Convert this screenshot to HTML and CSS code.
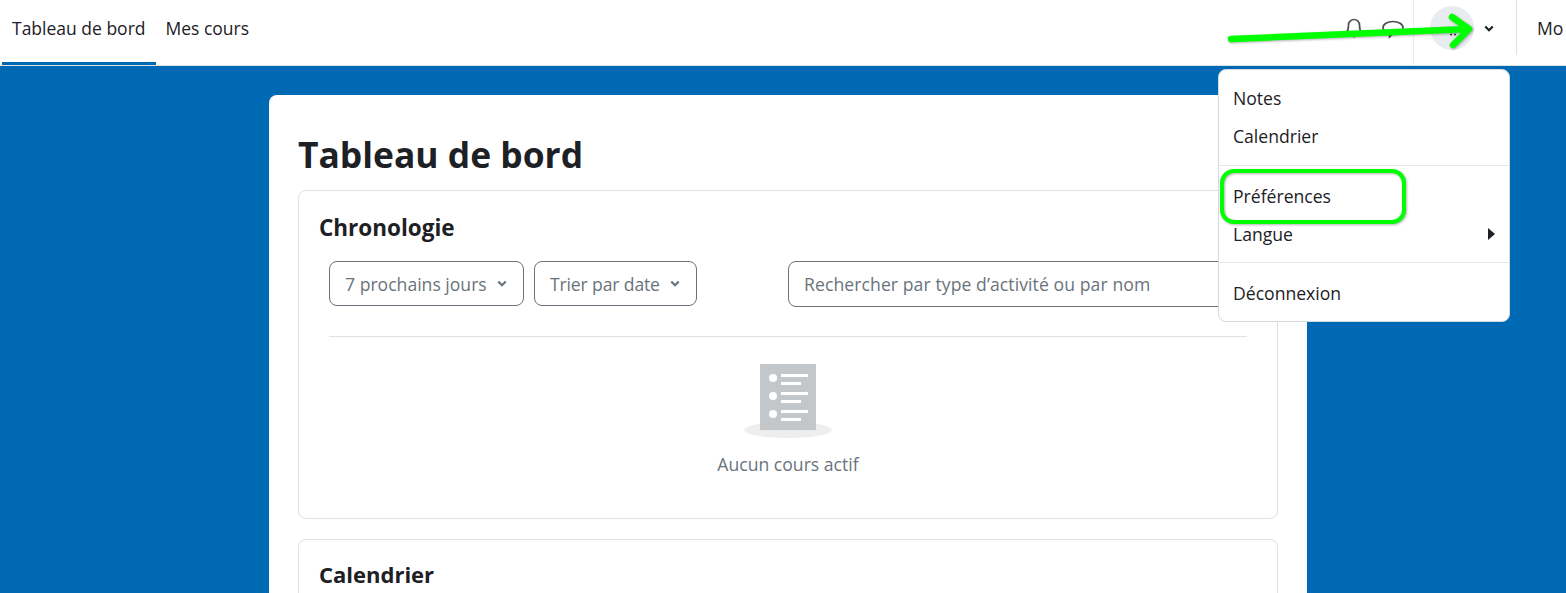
FILE: index.html
```html
<!DOCTYPE html>
<html lang="fr">
<head>
<meta charset="utf-8">
<title>Tableau de bord</title>
<link rel="stylesheet" href="styles.css">
</head>
<body>
<header class="navbar">
  <nav class="primary">
    <a class="tab active">Tableau de bord</a>
    <a class="tab">Mes cours</a>
  </nav>
  <div class="tools">
    <svg class="ico bell" viewBox="0 0 20 24" width="20" height="24"><path d="M2.500 17c1.500-2 2-4 2-8a5.500 5.500 0 0 1 11 0c0 4 .5 6 2 8z" fill="none" stroke="#4b5157" stroke-width="1.700"/><circle cx="10" cy="20" r="1.500" fill="#4b5157"/></svg>
    <svg class="ico chat" viewBox="0 0 24 24" width="24" height="24"><path d="M12 3.500c5.500 0 10 2.500 10 6s-4.500 6-10 6l-3.500 3.500v-4C4.500 14 2 12 2 9.500c0-3.500 4.500-6 10-6z" fill="none" stroke="#4b5157" stroke-width="1.700"/></svg>
    <div class="user">
      <span class="avatar"></span>
      <svg class="caret" viewBox="0 0 12 8" width="10" height="7"><path d="M1.500 1.500 6 6l4.500-4.500" fill="none" stroke="#1d2125" stroke-width="2.600"/></svg>
    </div>
    <div class="edit">Mo</div>
  </div>
</header>

<main class="page">
  <section class="main-card">
    <h1 class="title">Tableau de bord</h1>
    <article class="block timeline">
      <h2 class="block-title">Chronologie</h2>
      <div class="filters">
        <button class="select days">7 prochains jours<svg class="chev" viewBox="0 0 12 8" width="10" height="7"><path d="M1.500 1.500 6 6l4.500-4.500" fill="none" stroke="#6a737b" stroke-width="2.600"/></svg></button>
        <button class="select sort">Trier par date<svg class="chev" viewBox="0 0 12 8" width="10" height="7"><path d="M1.500 1.500 6 6l4.500-4.500" fill="none" stroke="#6a737b" stroke-width="2.600"/></svg></button>
        <div class="search">Rechercher par type d’activité ou par nom</div>
      </div>
      <hr class="rule">
      <div class="empty">
        <svg class="empty-ico" viewBox="0 0 88 76" width="88" height="76">
          <ellipse cx="44" cy="66" rx="44" ry="8" fill="#eeeeef"/>
          <rect x="16" y="0" width="56" height="66" fill="#c4c7ca"/>
          <g fill="#fff">
            <circle cx="29" cy="14" r="4"/><rect x="37" y="10" width="27" height="3"/><rect x="37" y="18" width="20" height="3"/>
            <circle cx="29" cy="32" r="4"/><rect x="37" y="28" width="27" height="3"/><rect x="37" y="36" width="20" height="3"/>
            <circle cx="29" cy="50" r="4"/><rect x="37" y="46" width="27" height="3"/><rect x="37" y="54" width="20" height="3"/>
          </g>
        </svg>
        <p class="empty-text">Aucun cours actif</p>
      </div>
    </article>
    <article class="block calendar">
      <h2 class="block-title">Calendrier</h2>
    </article>
  </section>
</main>

<div class="menu">
  <div class="menu-group">
    <a class="item">Notes</a>
    <a class="item">Calendrier</a>
  </div>
  <div class="menu-group">
    <a class="item">Préférences</a>
    <a class="item lang">Langue<span class="arrow"></span></a>
  </div>
  <div class="menu-group">
    <a class="item">Déconnexion</a>
  </div>
</div>

<svg class="annot-arrow" viewBox="0 0 260 50" width="260" height="50">
  <path d="M224 26.500h2M228 26.500h2" fill="none" stroke="#333" stroke-width="1.500"/>
  <path d="M5 31 L242 21 M226 9 L243 21 L227 37" fill="none" stroke="#00ff00" stroke-width="6.500" stroke-linecap="round" stroke-linejoin="round"/>
</svg>
<div class="annot-box"></div>
</body>
</html>
```

FILE: styles.css
```css
* { box-sizing: border-box; }
html, body { height: 100%; }
body {
  margin: 0;
  overflow: hidden;
  background: #0069b4;
  color: #1d2125;
  font-family: "Open Sans", "Noto Sans", sans-serif;
  font-size: 17.6px;
}
.navbar {
  height: 66px;
  background: #fff;
  border-bottom: 1px solid #dee2e6;
  display: flex;
  justify-content: space-between;
  overflow: hidden;
}
.primary { display: flex; padding-left: 2px; height: 65px; }
.tab {
  padding: 0 10px;
  line-height: 57px;
  height: 65px;
  border-bottom: 3px solid transparent;
  font-size: 17.5px;
  white-space: nowrap;
}
.tab.active { border-bottom-color: #0069b4; }
.tools { display: flex; align-items: flex-start; width: 240px; flex: none; overflow: hidden; }
.ico { flex: none; margin-top: 16px; }
.bell { margin-left: 18px; }
.chat { margin-left: 17px; margin-top: 18px; }
.user {
  margin-left: 8px;
  width: 103px;
  height: 65px;
  border-left: 1px solid #e6ecf1;
  display: flex;
  padding-left: 16px;
  flex: none;
}
.avatar { width: 44px; height: 44px; border-radius: 50%; background: #e9ecef; margin-top: 6px; flex: none; }
.caret { margin: 25px 0 0 10px; flex: none; }
.edit {
  flex: none;
  height: 55px;
  border-left: 1px solid #dee2e6;
  padding-left: 20px;
  line-height: 57px;
  white-space: nowrap;
}
.page { padding: 29px 0 0 269px; }
.main-card {
  width: 1038px;
  height: 600px;
  background: #fff;
  border-radius: 8px 8px 0 0;
  padding: 32px 29px 0;
}
.title { margin: 0 0 9px; font-size: 35.4px; line-height: 54px; font-weight: 700; }
.block {
  border: 1px solid #dee2e6;
  border-radius: 8px;
  padding: 20px;
}
.timeline { height: 329px; margin-bottom: 20px; padding-top: 22px; }
.timeline .block-title { font-size: 22.5px; }
.block-title { margin: 0; font-size: 22px; line-height: 30px; font-weight: 700; }
.filters { display: flex; margin: 18px 10px 0; gap: 10px; width: 917px; }
.select {
  height: 45px;
  border: 1px solid #6a737b;
  border-radius: 8px;
  background: #fff;
  color: #6a737b;
  font: inherit;
  padding: 0 15px;
  display: flex;
  align-items: center;
  gap: 10px;
  white-space: nowrap;
}
.days { width: 195px; }
.sort { width: 163px; letter-spacing: -.15px; }
.search {
  margin-left: 81px;
  flex: 1;
  height: 46px;
  border: 1px solid #6a737b;
  border-radius: 8px;
  color: #6a737b;
  padding: 0 15px;
  line-height: 44px;
  letter-spacing: .08px;
  white-space: nowrap;
}
.rule { border: 0; border-top: 1px solid #dee2e6; margin: 29px 10px 0; width: 918px; }
.empty { display: flex; flex-direction: column; align-items: center; margin-top: 27px; color: #6a737b; width: 938px; }
.empty-text { margin: 11px 0 0; line-height: 26px; }
.calendar { height: 100px; padding-top: 19px; }
.menu {
  position: absolute;
  left: 1218px;
  top: 69px;
  width: 292px;
  height: 253px;
  background: #fff;
  border: 1px solid #d5d8dc;
  border-radius: 8px;
  padding-top: 8px;
}
.menu-group { padding-bottom: 10px; border-bottom: 1px solid #e6e8eb; margin-bottom: 10px; }
.menu-group:first-child { padding-bottom: 11px; }
.menu-group:last-child { border-bottom: 0; margin-bottom: 0; }
.item { display: flex; justify-content: space-between; align-items: center; height: 38px; padding: 2px 14px 0; }
.arrow { width: 0; height: 0; border-left: 7px solid #1d2125; border-top: 6px solid transparent; border-bottom: 6px solid transparent; }
.annot-arrow { position: absolute; left: 1226px; top: 8px; filter: drop-shadow(1px 1px 1px rgba(0, 0, 0, .3)); }
.annot-box {
  position: absolute;
  left: 1220px;
  top: 169px;
  width: 186px;
  height: 55px;
  border: 4px solid #00ff00;
  border-radius: 14px;
  filter: drop-shadow(1px 1px 1px rgba(0, 0, 0, .3));
}
```
